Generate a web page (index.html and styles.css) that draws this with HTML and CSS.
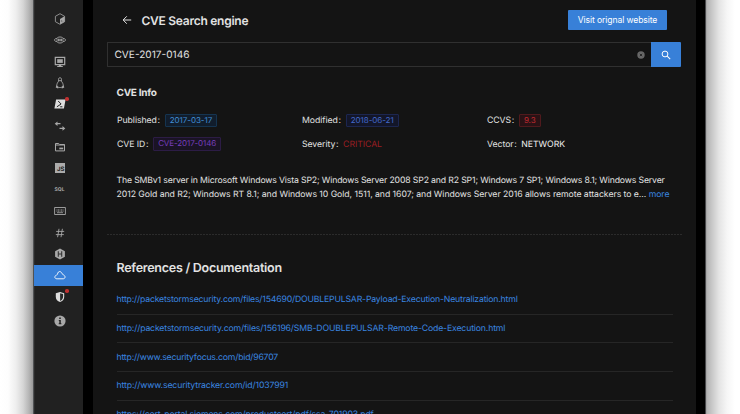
FILE: index.html
```html
<!DOCTYPE html>
<html lang="en">
<head>
<meta charset="utf-8">
<title>CVE Search engine</title>
<link rel="stylesheet" href="styles.css">
</head>
<body>
<div class="window">
  <nav class="sidebar">
    <a class="item"><svg viewBox="0 0 12 12"><path d="M6 .7 10.6 3.3v5.4L6 11.3 1.4 8.7V3.3z" fill="none" stroke="currentColor" stroke-width=".8"/><path d="M6 5.9 10.6 3.3v5.4L6 11.3z" fill="currentColor"/><path d="M7.4 7.2v1.6M8.8 7.8v.7" stroke="#444" stroke-width=".6"/></svg></a>
    <a class="item"><svg viewBox="0 0 12 12"><path d="M3 4.3C4 2.5 8 2.5 9 4.3M3 7.7c1 1.8 5 1.8 6 0" fill="none" stroke="currentColor" stroke-width=".9"/><path d="M3 4.4C-.3 4.4-.3 7.6 3 7.6M9 4.4c3.3 0 3.3 3.2 0 3.2M2.2 6h7.6M4.4 4.7v2.6M6 4.7v2.6M7.6 4.7v2.6" fill="none" stroke="currentColor" stroke-width=".9"/></svg></a>
    <a class="item"><svg viewBox="0 0 12 12"><path d="M1.3 1.3h9.4v7.4H1.3z" fill="none" stroke="currentColor" stroke-width="1.2"/><path d="M3.2 3.2h5.6v3.7H3.2z" fill="currentColor"/><path d="M4.8 8.7h2.4v1.2h1.6v1.1H3.2V9.9h1.6z" fill="currentColor"/></svg></a>
    <a class="item"><svg viewBox="0 0 12 12"><path d="M4.6 4.2C4.3 1.9 4.7.7 6 .7s1.7 1.2 1.4 3.5c1 1.2 2 3 1.8 4.7M4.6 4.2C3.6 5.4 2.6 7.2 2.8 8.9" fill="none" stroke="currentColor" stroke-width=".9"/><path d="M2.4 8.2 4.8 10l-.7 1.4-2.4-.8zM9.6 8.2 7.2 10l.7 1.4 2.4-.8zM4.8 3.4 6 3l1.2.4L6 4.6zM4.8 10h2.4v.8H4.8z" fill="currentColor"/></svg></a>
    <a class="item bright"><svg viewBox="0 0 12 12"><path d="M2.1 1.5h9.5L9.9 10.500H.4z" fill="currentColor"/><path d="m4.2 3 2.9 3-4.2 2.8M6.2 8.8h2.2" fill="none" stroke="#222" stroke-width="1"/></svg><i class="dot"></i></a>
    <a class="item"><svg viewBox="0 0 12 12"><path d="M2.3 3.7h4.2M5.5 8.4h4.2" stroke="currentColor" stroke-width="1.2" fill="none"/><path d="M.7 3.7 3.5 1.4V6zM11.3 8.4 8.5 6.1v4.6z" fill="currentColor"/></svg></a>
    <a class="item"><svg viewBox="0 0 12 12"><path d="M1.5 2.5h3.200l1 1h4.800v6.400h-9z" fill="none" stroke="currentColor" stroke-width="1"/><path d="M1.500 4h9" stroke="currentColor" stroke-width="1"/><path d="M5.300 6.600h3.900v1.700H5.300z" fill="currentColor"/></svg></a>
    <a class="item js"><span>JS</span></a>
    <a class="item sql"><span>SQL</span></a>
    <a class="item"><svg viewBox="0 0 12 12"><path d="M.6 2.500h10.800v7H.6z" fill="none" stroke="currentColor" stroke-width=".9"/><path d="M2.500 4.900h7M2.500 6.200h7" stroke="currentColor" stroke-width=".8" stroke-dasharray="1 .5"/><path d="M3 7.700h6" stroke="currentColor" stroke-width=".8"/></svg></a>
    <a class="item"><svg viewBox="0 0 12 12"><path d="M5 1.800 3.600 10.200M8.400 1.800 7 10.200M2.200 4.400h8M1.800 7.600h8" stroke="currentColor" stroke-width=".9"/></svg></a>
    <a class="item"><svg viewBox="0 0 12 12"><path d="M6 .4 10.900 3.200v5.600L6 11.600 1.100 8.800V3.200z" fill="currentColor"/><path d="M4.300 3.300v5.400M7.700 3.300v5.400M4.300 6h3.400" stroke="#333" stroke-width="1.100"/></svg></a>
    <a class="item active"><svg viewBox="0 0 12 12"><path d="M3.100 9.800h6.200c2.200-.2 2.400-3.100.2-3.700C8.900 5 8 4.900 7.500 3.700 6.700 1.900 4.300 2.200 3.800 4.100c-.3 1-.6 1.700-1.400 2.200C0 7 .4 9.800 3.100 9.800z" fill="none" stroke="currentColor" stroke-width=".9"/></svg></a>
    <a class="item bright"><svg viewBox="0 0 12 12"><path d="M6 1 10.200 2.300v3.400C10.200 8.500 8.400 10.200 6 11.100 3.600 10.200 1.800 8.500 1.800 5.700V2.300z" fill="currentColor"/><path d="M6.100 2.200 9.100 3.100v2.700c0 2-1.200 3.300-3 4.100z" fill="#2a2a2a"/></svg><i class="dot"></i></a>
    <a class="item info"><svg viewBox="0 0 12 12"><circle cx="6" cy="6" r="5.600" fill="currentColor"/><path d="M5.200 2.600h1.600v1.400H5.200zM4.800 5h2v3.300h.6v.9H4.700v-.9h.6V5.900h-.5z" fill="#222"/></svg></a>
  </nav>
  <main class="main">
    <header class="header">
      <svg class="back" viewBox="0 0 10 10"><path d="M9.200 5H1.200M4.800 1.300 1.100 5l3.700 3.700" fill="none" stroke="currentColor" stroke-width="1"/></svg>
      <h1>CVE Search engine</h1>
      <button class="visit"><span>Visit orignal website</span></button>
    </header>
    <div class="search">
      <div class="field"><span>CVE-2017-0146</span>
        <svg viewBox="0 0 8 8"><circle cx="4" cy="4" r="3.700" fill="#686868"/><path d="m2.800 2.800 2.400 2.400M5.200 2.800 2.800 5.200" stroke="#1b1b1b" stroke-width=".8"/></svg>
      </div>
      <button class="go"><svg viewBox="0 0 10 10"><circle cx="4" cy="4" r="2.900" fill="none" stroke="currentColor" stroke-width="1"/><path d="m6.200 6.200 3 3" stroke="currentColor" stroke-width="1.100"/></svg></button>
    </div>
    <section class="content">
      <h2 class="info-title">CVE Info</h2>
      <div class="facts">
        <div class="fact"><span>Published<b>:</b></span><em class="tag blue">2017-03-17</em></div>
        <div class="fact"><span>Modified<b>:</b></span><em class="tag geek">2018-06-21</em></div>
        <div class="fact"><span>CCVS<b>:</b></span><em class="tag red">9.3</em></div>
        <div class="fact"><span>CVE ID<b>:</b></span><em class="tag purple">CVE-2017-0146</em></div>
        <div class="fact"><span>Severity<b>:</b></span><span class="critical">CRITICAL</span></div>
        <div class="fact"><span>Vector<b>:</b></span><span class="network">NETWORK</span></div>
      </div>
      <p class="summary"><span class="line1">The SMBv1 server in Microsoft Windows Vista SP2; Windows Server 2008 SP2 and R2 SP1; Windows 7 SP1; Windows 8.1; Windows Server</span><br><span class="line2">2012 Gold and R2; Windows RT 8.1; and Windows 10 Gold, 1511, and 1607; and Windows Server 2016 allows remote attackers to e... <a>more</a></span></p>
    </section>
    <svg class="divider" viewBox="0 0 575 1"><path d="M0 .5h575" stroke="#2b2b2b" stroke-dasharray="2 1"/></svg>
    <section class="content">
      <h2 class="refs-title">References / Documentation</h2>
      <ul class="refs">
        <li><a>http://packetstormsecurity.com/files/154690/DOUBLEPULSAR-Payload-Execution-Neutralization.html</a></li>
        <li><a>http://packetstormsecurity.com/files/156196/SMB-DOUBLEPULSAR-Remote-Code-Execution.html</a></li>
        <li><a>http://www.securityfocus.com/bid/96707</a></li>
        <li><a>http://www.securitytracker.com/id/1037991</a></li>
        <li><a>https://cert-portal.siemens.com/productcert/pdf/ssa-701903.pdf</a></li>
      </ul>
    </section>
  </main>
</div>
</body>
</html>
```
FILE: styles.css
```css
* { box-sizing: border-box; }
body {
  margin: 0;
  height: 414px;
  overflow: hidden;
  display: grid;
  grid-template-columns: 33px 673px 34px;
  background: linear-gradient(90deg, #fff 0, #fdfdfd 8px, #eee 16px, #d6d6d6 23px, #b5b5b5 29px, #999 33px, #999 706px, #b3b3b3 707px, #c8c8c8 712px, #e4e4e4 719px, #f6f6f6 727px, #fff 735px);
  font-family: Inter, "Liberation Sans", sans-serif;
  font-size: 9px;
  color: #e2e2e2;
  text-rendering: geometricPrecision;
}
.window {
  grid-column: 2;
  height: 414px;
  overflow: hidden;
  display: flex;
  background: #000;
  border-left: 1px solid #505254;
  border-right: 1px solid #48484a;
}
.sidebar {
  width: 49px;
  margin-right: 10px;
  padding-top: 8.3px;
  background: #212121;
  border-left: 1px solid #2b2b2b;
  color: #a8a8a8;
  display: flex;
  flex-direction: column;
}
.item {
  height: 21.36px;
  flex: none;
  display: flex;
  align-items: center;
  justify-content: center;
  position: relative;
  padding-left: 1px;
}
.item svg { width: 12px; height: 12px; display: block; }
.bright { color: #dedede; }
.active { background: #3880d8; color: #fff; margin-left: -1px; padding-left: 2px; }
.info { margin-top: 2.5px; }
.dot {
  position: absolute;
  width: 3.5px;
  height: 3.5px;
  border-radius: 50%;
  background: #c03030;
  left: 30px;
  top: 3.5px;
}
.js span {
  width: 10px;
  height: 10px;
  background: #ababab;
  color: #222;
  font-size: 6px;
  font-weight: 700;
  line-height: 13px;
  text-align: right;
}
.sql span { font-size: 5px; font-weight: 700; }
.main {
  width: 603px;
  flex: none;
  padding-left: 14px;
  background: #141414;
}
.header { height: 42px; padding: 10px 28.5px 0 14.5px; display: flex; align-items: flex-start; }
.back { width: 10px; height: 10px; margin: 5px 10px 0 0; }
h1, h2, p, ul { margin: 0; padding: 0; }
h1 { font-size: 12px; line-height: 21px; font-weight: 600; flex: 1; letter-spacing: -.26px; white-space: nowrap; }
button { border: 0; padding: 0; background: #3880d8; color: #fff; font: inherit; }
.visit { width: 99px; height: 20px; border-radius: 1px; font-size: 8.6px; letter-spacing: -.1px; white-space: nowrap; position: relative; left: -.5px; }
.search { width: 574px; height: 25px; display: flex; }
.field {
  flex: 1;
  border: 1px solid #303030;
  border-right: 0;
  border-radius: 1px 0 0 1px;
  padding: 0 6px 0 6.500px;
  display: flex;
  align-items: center;
  justify-content: space-between;
  font-size: 10.100px;
}
.field svg { width: 8px; height: 8px; }
.go { width: 30px; border-radius: 0 1px 1px 0; display: flex; align-items: center; justify-content: center; }
.go svg { width: 10px; height: 10px; }
.content { margin-left: 9.500px; width: 556px; }
.info-title { margin-top: 18.500px; font-size: 10px; line-height: 14px; font-weight: 700; letter-spacing: -.25px; }
.facts { margin-top: 9px; display: grid; grid-template-columns: repeat(3, 185px); grid-auto-rows: 23.700px; }
.fact { display: flex; align-items: center; white-space: nowrap; font-size: 8.700px; padding-left: .5px; letter-spacing: -.05px; }
.fact > span { padding-top: 1px; }
.fact b { font-weight: 400; margin: 0 4.700px 0 .7px; }
.tag { font-style: normal; font-size: 8px; height: 13.500px; line-height: 11.500px; padding: 0 4px; border: 1px solid; border-radius: 1px; letter-spacing: -.03px; }
.blue { color: #4290d8; background: #111d2c; border-color: #153450; }
.geek { color: #436bce; background: #131629; border-color: #1c2650; }
.red { color: #c02a30; background: #2a1215; border-color: #501a1d; }
.purple { color: #783fbd; background: #1a1325; border-color: #2c1c45; letter-spacing: -.11px; }
.critical { color: #9a1e23; }
.network { color: #efefef; }
.summary { margin-top: 19.500px; line-height: 13.700px; font-size: 8.700px; white-space: nowrap; }
.line1 { letter-spacing: -.145px; }
.line2 { letter-spacing: -.045px; }
a { color: inherit; }
.summary a, .refs a { color: #3a86e0; }
.divider { display: block; width: 575px; height: 1px; margin-top: 31px; }
.refs-title { margin-top: 25px; font-size: 12.500px; line-height: 18px; font-weight: 600; letter-spacing: -.26px; white-space: nowrap; }
.refs { list-style: none; margin-top: 8px; }
.refs li { height: 28.750px; padding-top: 1px; border-bottom: 1px solid #262626; display: flex; align-items: center; font-size: 8.700px; letter-spacing: -.13px; white-space: nowrap; }
.refs li:nth-child(1) { letter-spacing: -.175px; }
.refs li:nth-child(2) { letter-spacing: -.15px; }
.refs li:nth-child(3) { letter-spacing: -.2px; }
```
